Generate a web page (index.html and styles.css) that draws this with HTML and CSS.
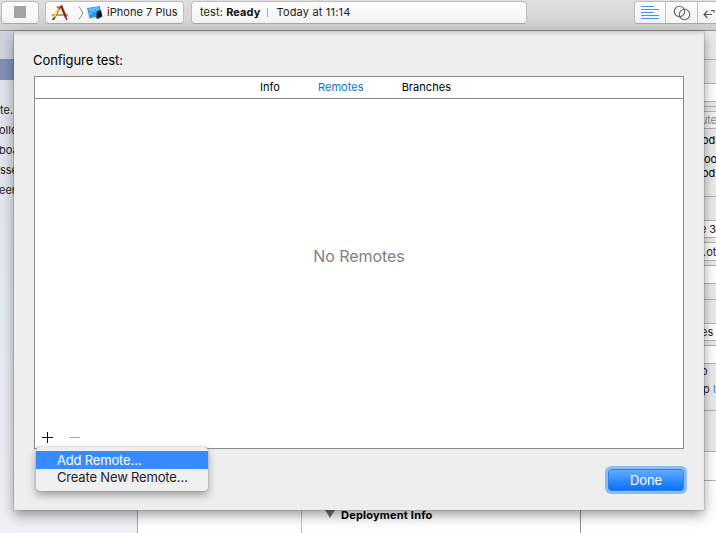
FILE: index.html
```html
<!DOCTYPE html>
<html lang="en">
<head>
<meta charset="utf-8">
<title>Configure test</title>
<link rel="stylesheet" href="styles.css">
</head>
<body>
<div class="window">
  <header class="toolbar">
    <div class="tool stop"><span class="stop-mark"></span></div>
    <div class="tool scheme">
      <svg class="app-icon" width="18" height="18" viewBox="0 0 18 18" fill="none">
        <path d="M1 11h16" stroke="#b08a55" stroke-width="1.600"/>
        <path d="M2.500 15.500 9.500 2.500" stroke="#70562c" stroke-width="1.600"/>
        <path d="M3.500 12.500 7.500 4.500" stroke="#e9d83b" stroke-width="2"/>
        <path d="M6 2.500 8 4" stroke="#d65c4c" stroke-width="2"/>
        <path d="M10 1.500 15 13.500" stroke="#a31918" stroke-width="2.200"/>
        <path d="m14.500 13 1.500 3" stroke="#631d17" stroke-width="1.300"/>
        <path d="m1.700 16 .8-2" stroke="#43301c" stroke-width="1.300"/>
      </svg>
      <svg class="crumb" width="6" height="14" viewBox="0 0 6 14" fill="none" stroke="#8b8b8b"><path d="m1 .5 4 6.500-4 6.500"/></svg>
      <svg class="device-icon" width="16" height="15" viewBox="0 0 16 15">
        <path d="m0 3 13-2 1 10-11.500 2.500z" fill="#2c9cf0"/>
        <path d="m1.500 3.600 10.300-1.600.5 3.500-9.800 4.500z" fill="#5ebcff"/>
        <path d="m3 12 6-8M2 6l9 4" stroke="#1678d0" stroke-width=".5"/>
        <path d="m9.800 6 4.200-1 1.400 6.500-4.700 2.500-1.500-1z" fill="#222b36"/>
        <path d="m11.200 7 2.600-.7 1 4.600-2.600 1.200z" fill="#101418"/>
      </svg>
      <span class="scheme-name">iPhone 7 Plus</span>
    </div>
    <div class="tool activity"><span class="project">test: <b>Ready</b></span><i class="bar"></i><span class="time">Today at 11:14</span></div>
    <div class="tool modes">
      <span class="mode first"><svg width="18" height="13" viewBox="0 0 18 13" stroke="#4294f4"><path d="M0 .5h13M0 3.500h18M0 6.500h13M0 9.500h18M0 12.500h18" /></svg></span>
      <span class="mode"><svg width="18" height="16" viewBox="0 0 18 16" fill="none" stroke="#666" stroke-width="1.100"><circle cx="6.500" cy="6.500" r="5.200"/><circle cx="11.500" cy="9.500" r="5.200"/></svg></span>
      <span class="mode last"><svg width="12" height="14" viewBox="0 0 12 14" fill="none" stroke="#555" stroke-width="1.200"><path d="M4.500 5 1 8.500 4.500 12M1 8.500h8M8 4.500h3v2"/></svg></span>
    </div>
  </header>
  <div class="workspace">
    <nav class="navigator">
      <div class="filter"></div>
      <div class="selected"></div>
      <ul class="files"><li>te.</li><li class="tight">olle</li><li class="tight">boa</li><li>sse</li><li class="tight">eer</li></ul>
    </nav>
    <div class="targets"></div>
    <main class="editor"><div class="section"><svg width="10" height="8" viewBox="0 0 10 8"><path d="M0 0h10L5 8z" fill="#727272"/></svg><span>Deployment Info</span></div></main>
    <aside class="inspector">
      <div class="row tabs"></div>
      <div class="row heading"></div>
      <div class="row field"></div>
      <div class="row gap"></div>
      <div class="row gap"></div>
      <div class="row field attr">ute</div>
      <div class="row code"><p>od</p><p class="slash">/oo</p><p>od</p></div>
      <div class="row heading"></div>
      <div class="row field format">e 3</div>
      <div class="row gap"></div>
      <div class="row field location">.ot</div>
      <div class="row gap"></div>
      <div class="row field"></div>
      <div class="row spacer"></div>
      <div class="row heading"></div>
      <div class="row field spaces">es</div>
      <div class="row gap"></div>
      <div class="row field"></div>
      <div class="row wrap"><p>o</p><p class="option">p <em>I</em></p></div>
      <div class="row source"></div>
      <div class="row library"></div>
    </aside>
  </div>
  <section class="sheet">
    <h1>Configure test:</h1>
    <div class="panel">
      <div class="panel-tabs"><span class="info">Info</span><span class="remotes">Remotes</span><span class="branches">Branches</span></div>
      <div class="empty">No Remotes</div>
      <div class="actions"><i class="plus"></i><i class="minus"></i></div>
    </div>
    <button class="done"><span>Done</span></button>
    <div class="menu"><div class="item active"><span class="add">Add Remote…</span></div><div class="item"><span class="create">Create New Remote…</span></div></div>
  </section>
</div>
</body>
</html>
```
FILE: styles.css
```css
* { box-sizing: border-box; }
body { margin: 0; font: 11px/14px Inter, "Liberation Sans", sans-serif; color: #222; }
svg { display: block; flex: none; }
p, ul, h1 { margin: 0; padding: 0; }
.window { position: relative; width: 716px; height: 533px; overflow: hidden; }

.toolbar { display: flex; height: 31px; background: linear-gradient(#dfdfdf, #cecece); border-bottom: 1px solid #929292; }
.tool { display: flex; align-items: center; height: 23px; margin-top: 1px; border: 1px solid #bdbdbd; border-bottom-color: #aaa; border-radius: 4px; background: linear-gradient(#fdfdfd, #f2f2f2); flex: none; }
.stop { width: 38px; margin-left: 1px; justify-content: center; }
.stop-mark { width: 12px; height: 12px; background: #a3a3a3; margin: 0 0 1px; }
.scheme { width: 139px; margin-left: 6px; padding-left: 5px; }
.crumb { margin-left: 9px; }
.device-icon { margin-left: 3px; }
.scheme-name { margin: -1px 0 0 4px; white-space: nowrap; letter-spacing: .03px; }
.activity { width: 336px; margin-left: 7px; padding: 0 0 1px 8px; }
.project { letter-spacing: .1px; }
.project b { font-weight: 700; color: #111; }
.bar { width: 1px; height: 9px; background: #aaa; margin: 0 8px 0 7px; }
.time { letter-spacing: .18px; }
.modes { width: 96px; margin-left: 107px; border-right: 0; border-radius: 4px 0 0 4px; }
.mode { display: flex; align-items: center; justify-content: center; width: 32px; height: 21px; border-right: 1px solid #c4c4c4; flex: none; }
.mode.first { width: 31px; }
.mode.last { width: 18px; border: 0; padding-left: 4px; }

.workspace { display: grid; grid-template-columns: 138px 164px 279px 135px; height: 502px; background: #fff; }
.navigator { border-right: 1px solid #a6a6a6; background: linear-gradient(#dde2eb, #e6ebf2 60%, #edf0f4); }
.filter { height: 28px; background: #d0d4df; }
.selected { height: 21px; background: #8190b5; }
.files { padding-top: 20px; list-style: none; }
.files li { height: 20px; line-height: 20px; }
.files .tight { margin-left: -1px; }
.targets { border-right: 1px solid #bebebe; }
.editor { display: flex; align-items: flex-end; border-right: 1px solid #929292; }
.section { display: flex; align-items: center; height: 38px; padding-left: 23px; font-weight: 700; color: #000; letter-spacing: .2px; }
.section span { margin: 1px 0 0 6px; }
.inspector { background: linear-gradient(#ebebeb 421px, #fff 421px); }
.row { border-bottom: 1px solid #b1b1b1; padding-left: 121px; white-space: nowrap; overflow: hidden; }
.tabs { height: 29px; }
.heading { height: 24px; }
.field { height: 18px; line-height: 17px; background: #fff; }
.gap { height: 5px; }
.attr { height: 17px; background: #f3f3f3; color: #888; padding-left: 120px; letter-spacing: -.2px; }
.code { height: 68px; padding-top: 4px; color: #000; }
.code .slash { margin: 5px 0 0 -2px; }
.format { height: 17px; padding-left: 119px; letter-spacing: -.1px; }
.location { height: 18px; line-height: 19px; padding-left: 122px; }
.spacer { height: 16px; }
.spaces { height: 17px; padding-left: 120px; }
.wrap { height: 47px; padding-left: 120px; }
.wrap .option { margin-top: 4px; padding-left: 2px; }
.wrap em { font-style: normal; color: #318ad2; }
.source { height: 41px; }
.library { height: 29px; background: #fff; }

/* The sheet hangs over the workspace. */
.sheet { position: absolute; left: 14px; top: 31px; width: 690px; height: 479px; padding: 21px 20px 0; background: #eee; box-shadow: 0 5px 12px rgba(0,0,0,.4), 0 0 1px rgba(0,0,0,.65), inset 0 4px 4px -3px rgba(0,0,0,.22); }
.sheet h1 { font-size: 13px; line-height: 16px; font-weight: 400; color: #000; margin-left: -1px; letter-spacing: -.08px; }
.panel { display: flex; flex-direction: column; width: 650px; height: 373px; margin-top: 8px; border: 1px solid #8c8c8c; background: #fff; }
.panel-tabs { display: flex; height: 22px; line-height: 20px; border-bottom: 1px solid #8c8c8c; color: #000; padding-left: 225px; flex: none; letter-spacing: .05px; }
.remotes { margin-left: 38px; color: #0b70d8; }
.branches { margin-left: 38px; }
.empty { display: flex; flex: 1; align-items: center; justify-content: center; font-size: 16px; color: #808080; padding-bottom: 14px; letter-spacing: -.05px; }
.actions { display: flex; align-items: center; height: 22px; padding-left: 7px; }
.plus { width: 11px; height: 11px; background: linear-gradient(#111, #111) center / 11px 1px no-repeat, linear-gradient(#111, #111) center / 1px 11px no-repeat; }
.minus { width: 11px; height: 1px; margin-left: 16px; background: #aaa; }
.done { display: flex; align-items: center; justify-content: center; width: 76px; height: 22px; margin: 20px 0 0 574px; padding: 0; border: 1px solid #2984ed; border-radius: 3px; background: linear-gradient(#60abfb, #0b70fe); box-shadow: 0 0 0 3px #8dbcf5; color: #fff; font: 13px/16px Inter, sans-serif; }
.done span { letter-spacing: -.1px; margin-top: -1px; }
.menu { position: absolute; left: 22px; top: 416px; width: 172px; height: 44px; padding: 4px 0; border-radius: 4px; background: #efefef; box-shadow: 0 0 1px rgba(0,0,0,.6), 0 4px 9px rgba(0,0,0,.35); font-size: 13px; letter-spacing: -.17px; }
.item { height: 18px; line-height: 17px; padding-left: 21px; white-space: nowrap; }
.active { color: #fff; background: #368cff; line-height: 18px; }
```
